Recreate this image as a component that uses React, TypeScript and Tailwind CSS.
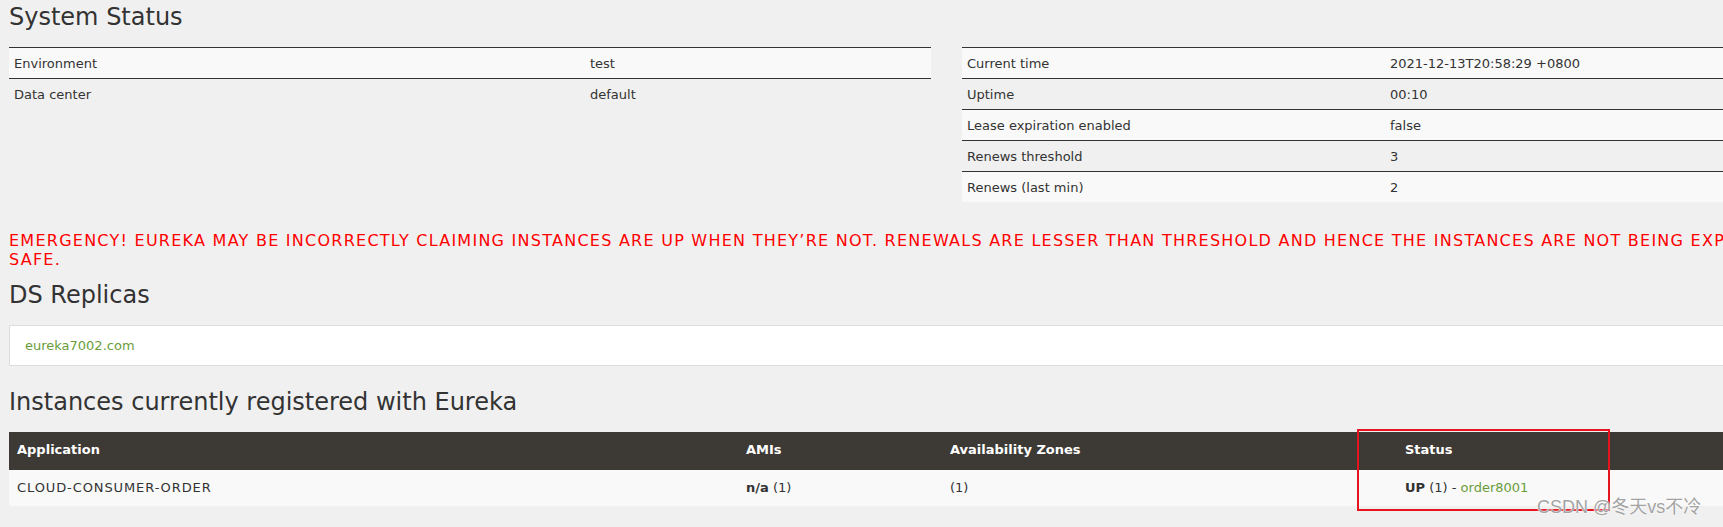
import React from 'react';

const ENV_ROWS = [
  ['Environment', 'test'],
  ['Data center', 'default'],
];

const STATUS_ROWS = [
  ['Current time', '2021-12-13T20:58:29 +0800'],
  ['Uptime', '00:10'],
  ['Lease expiration enabled', 'false'],
  ['Renews threshold', '3'],
  ['Renews (last min)', '2'],
];

const InfoTable = ({ rows, labelWidth }: { rows: string[][]; labelWidth: string }) => (
  <div className="flex flex-col">
    {rows.map(([label, value], i) => (
      <div
        key={label}
        className={`flex h-[31px] items-center border-t border-[#333] ${i % 2 === 0 ? 'bg-[#f9f9f9]' : ''}`}
      >
        <div className={`${labelWidth} shrink-0 px-[5px]`}>{label}</div>
        <div className="px-[5px]">{value}</div>
      </div>
    ))}
  </div>
);

const App = () => {
  return (
    <div className="relative min-h-screen w-full overflow-hidden bg-[#f0f0f0] font-['DejaVu_Sans',sans-serif] text-[13px] leading-[19px] text-[#333]">
      <div className="ml-[9px] w-[1875px]">
        {/* System status */}
        <h1 className="mt-[3px] text-[24px] leading-[28px] text-[#333]">System Status</h1>
        <div className="mt-[16px] grid grid-cols-2 items-start gap-[31px]">
          <InfoTable rows={ENV_ROWS} labelWidth="w-[576px]" />
          <InfoTable rows={STATUS_ROWS} labelWidth="w-[423px]" />
        </div>

        <p className="mt-[29px] text-[16px] leading-[19px] tracking-[1.25px] text-[#ff0000]">
          <span className="block whitespace-nowrap">
            EMERGENCY! EUREKA MAY BE INCORRECTLY CLAIMING INSTANCES ARE UP WHEN THEY’RE NOT. RENEWALS ARE LESSER THAN
            THRESHOLD AND HENCE THE INSTANCES ARE NOT BEING EXPIRED JUST TO BE
          </span>
          <span className="block">SAFE.</span>
        </p>

        {/* Replicas */}
        <h1 className="mt-[12px] text-[24px] leading-[28px]">DS Replicas</h1>
        <div className="mt-[16px] border border-[#ddd] bg-white px-[15px] py-[10px]">
          <a className="text-[#6a9d3a]">eureka7002.com</a>
        </div>

        {/* Instances */}
        <h1 className="mt-[22px] text-[24px] leading-[28px]">Instances currently registered with Eureka</h1>
        <div className="mt-[16px]">
          <div className="flex h-[38px] bg-[#3d3935] pt-[8px] font-bold text-white">
            <div className="w-[729px] shrink-0 px-[8px]">Application</div>
            <div className="w-[204px] shrink-0 px-[8px]">AMIs</div>
            <div className="w-[455px] shrink-0 px-[8px]">Availability Zones</div>
            <div className="px-[8px]">Status</div>
          </div>
          <div className="flex h-[36px] bg-[#f9f9f9] pt-[8px]">
            <div className="w-[729px] shrink-0 px-[8px] tracking-[0.9px]">CLOUD-CONSUMER-ORDER</div>
            <div className="w-[204px] shrink-0 px-[8px]">
              <b>n/a</b> (1)
            </div>
            <div className="w-[455px] shrink-0 px-[8px]">(1)</div>
            <div className="px-[8px]">
              <b>UP</b> (1) - <a className="text-[#6a9d3a]">order8001</a>
            </div>
          </div>
        </div>
      </div>

      {/* annotation box */}
      <div className="absolute left-[1357px] top-[429px] h-[82px] w-[253px] border-2 border-[#e5141f]" />

      {/* watermark */}
      <div className="absolute left-[1537px] top-[496px] font-['Liberation_Sans','Noto_Sans_CJK_SC',sans-serif] text-[18px] leading-[22px] text-[#a3a3a3] [text-shadow:0_0_2px_#fff,0_0_1px_#fff]">
        CSDN @冬天vs不冷
      </div>
    </div>
  );
};

export default App;
